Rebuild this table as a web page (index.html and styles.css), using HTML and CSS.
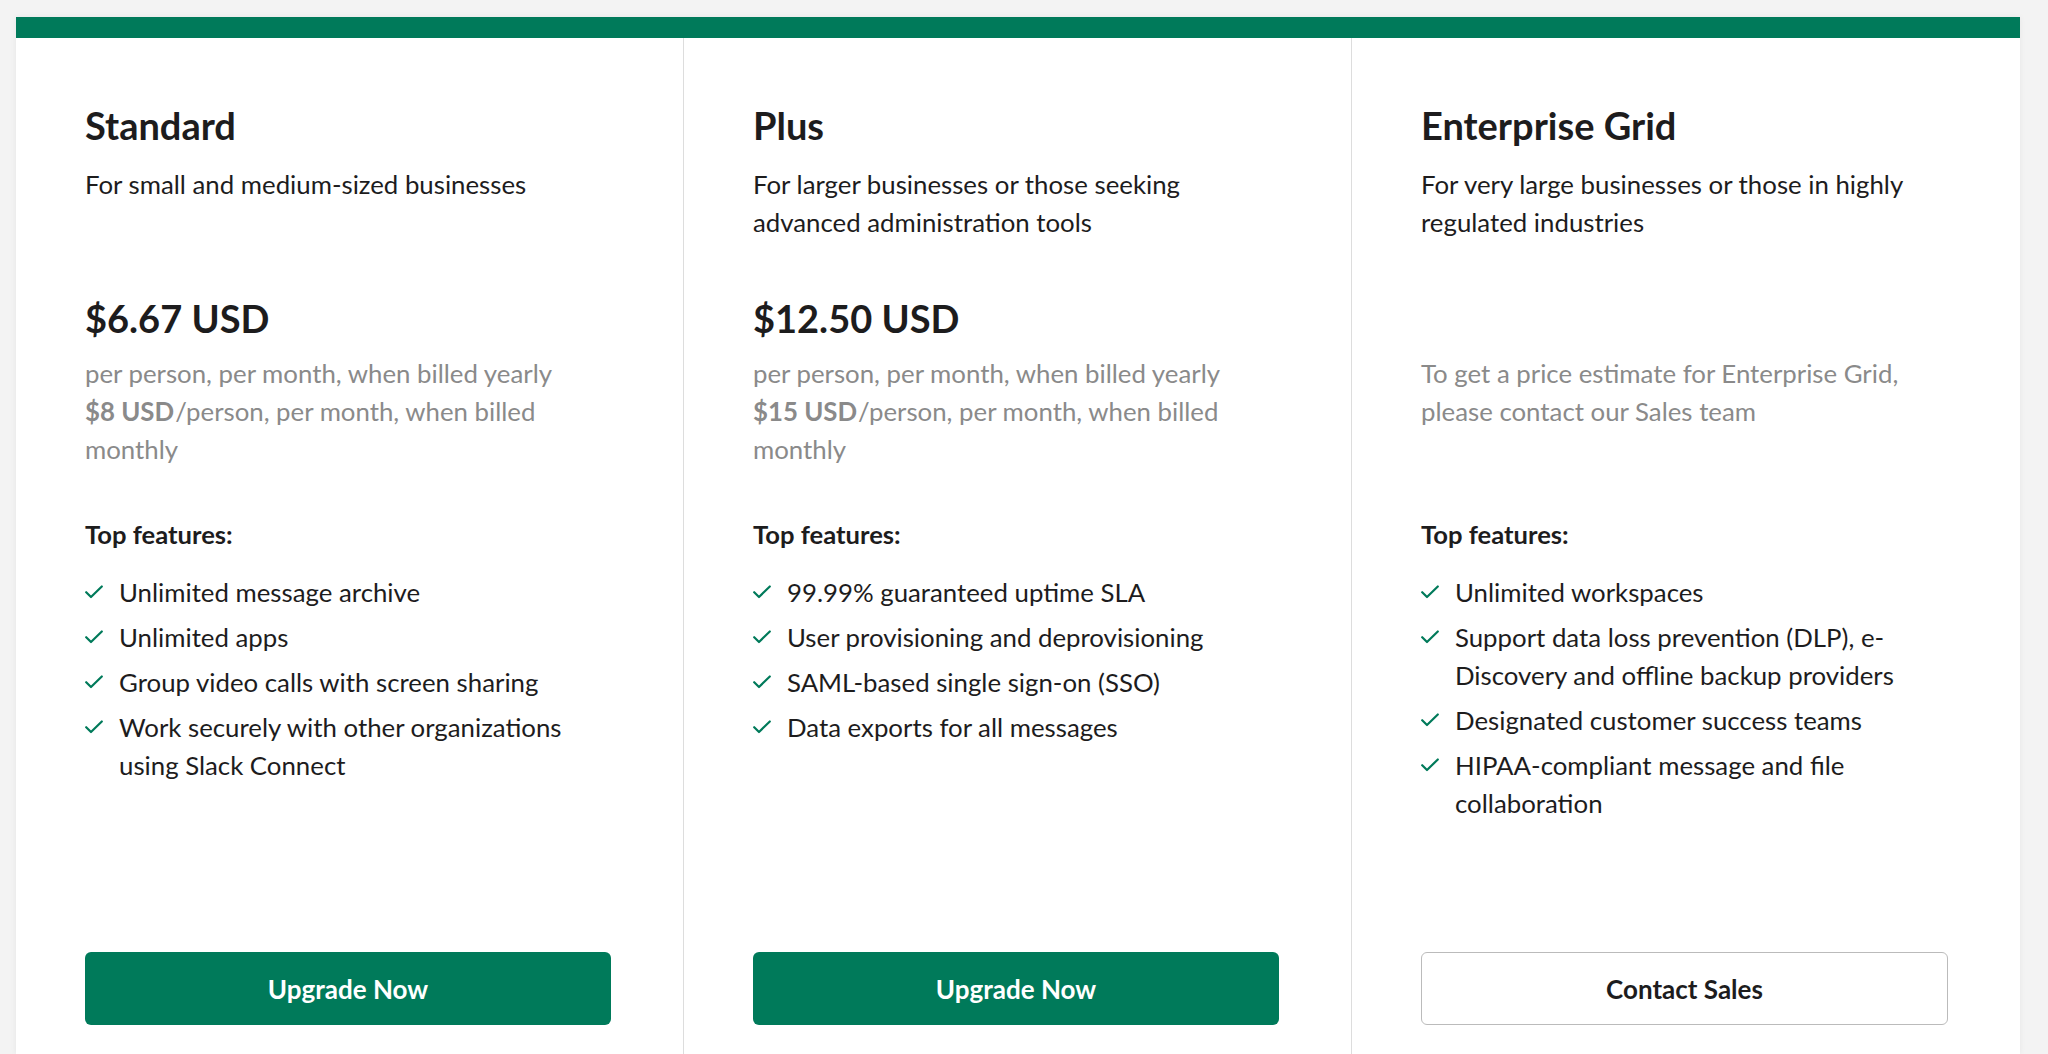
FILE: index.html
```html
<!DOCTYPE html>
<html lang="en">
<head>
<meta charset="utf-8">
<title>Plans</title>
<link rel="stylesheet" href="styles.css">
</head>
<body>
<div class="card">
  <div class="topbar"></div>
  <div class="plans">
    <section class="plan">
      <h2 class="plan-title">Standard</h2>
      <p class="plan-desc">For small and medium-sized businesses</p>
      <div class="price">$6.67 USD</div>
      <p class="price-note">per person, per month, when billed yearly<br><b>$8 USD</b>/person, per month, when billed monthly</p>
      <h3 class="feat-title">Top features:</h3>
      <ul class="features">
        <li><svg class="check" viewBox="0 0 18 14"><polyline points="1.2,7.2 6,12 16.8,1.5"/></svg><span>Unlimited message archive</span></li>
        <li><svg class="check" viewBox="0 0 18 14"><polyline points="1.2,7.2 6,12 16.8,1.5"/></svg><span>Unlimited apps</span></li>
        <li><svg class="check" viewBox="0 0 18 14"><polyline points="1.2,7.2 6,12 16.8,1.5"/></svg><span>Group video calls with screen sharing</span></li>
        <li><svg class="check" viewBox="0 0 18 14"><polyline points="1.2,7.2 6,12 16.8,1.5"/></svg><span>Work securely with other organizations using Slack Connect</span></li>
      </ul>
      <button class="btn btn-primary">Upgrade Now</button>
    </section>
    <section class="plan">
      <h2 class="plan-title">Plus</h2>
      <p class="plan-desc">For larger businesses or those seeking advanced administration tools</p>
      <div class="price">$12.50 USD</div>
      <p class="price-note">per person, per month, when billed yearly<br><b>$15 USD</b>/person, per month, when billed monthly</p>
      <h3 class="feat-title">Top features:</h3>
      <ul class="features">
        <li><svg class="check" viewBox="0 0 18 14"><polyline points="1.2,7.2 6,12 16.8,1.5"/></svg><span>99.99% guaranteed uptime SLA</span></li>
        <li><svg class="check" viewBox="0 0 18 14"><polyline points="1.2,7.2 6,12 16.8,1.5"/></svg><span>User provisioning and deprovisioning</span></li>
        <li><svg class="check" viewBox="0 0 18 14"><polyline points="1.2,7.2 6,12 16.8,1.5"/></svg><span>SAML-based single sign-on (SSO)</span></li>
        <li><svg class="check" viewBox="0 0 18 14"><polyline points="1.2,7.2 6,12 16.8,1.5"/></svg><span>Data exports for all messages</span></li>
      </ul>
      <button class="btn btn-primary">Upgrade Now</button>
    </section>
    <section class="plan">
      <h2 class="plan-title">Enterprise Grid</h2>
      <p class="plan-desc">For very large businesses or those in highly regulated industries</p>
      <div class="price"></div>
      <p class="price-note">To get a price estimate for Enterprise Grid, please contact our Sales team</p>
      <h3 class="feat-title">Top features:</h3>
      <ul class="features">
        <li><svg class="check" viewBox="0 0 18 14"><polyline points="1.2,7.2 6,12 16.8,1.5"/></svg><span>Unlimited workspaces</span></li>
        <li><svg class="check" viewBox="0 0 18 14"><polyline points="1.2,7.2 6,12 16.8,1.5"/></svg><span>Support data loss prevention (DLP), e-Discovery and offline backup providers</span></li>
        <li><svg class="check" viewBox="0 0 18 14"><polyline points="1.2,7.2 6,12 16.8,1.5"/></svg><span>Designated customer success teams</span></li>
        <li><svg class="check" viewBox="0 0 18 14"><polyline points="1.2,7.2 6,12 16.8,1.5"/></svg><span>HIPAA-compliant message and file collaboration</span></li>
      </ul>
      <button class="btn btn-outline">Contact Sales</button>
    </section>
  </div>
</div>
</body>
</html>
```
FILE: styles.css
```css
html, body {
  margin: 0;
  padding: 0;
  height: 100%;
}
body {
  background: #f3f3f3;
  font-family: Lato, "Noto Sans", sans-serif;
  color: #1d1c1d;
  overflow: hidden;
}
.card {
  margin: 17px 28px 0 16px;
  background: #fff;
  min-height: calc(100% - 17px);
  display: flex;
  flex-direction: column;
  box-shadow: 0 0 6px rgba(0,0,0,0.06);
}
.topbar {
  height: 21px;
  background: #007a5a;
}
.plans {
  flex: 1;
  display: grid;
  grid-template-columns: 667fr 668fr 669fr;
}
.plan {
  display: flex;
  flex-direction: column;
  padding: 65px 72px 29px 69px;
}
.plan + .plan {
  border-left: 1px solid #dddddd;
}
.plan-title {
  margin: 0;
  font-size: 38px;
  line-height: 1.2;
  font-weight: 700;
}
.plan-desc {
  margin: 16px 0 0;
  font-size: 25.8px;
  line-height: 38px;
  min-height: 76px;
}
.price {
  margin-top: 55px;
  font-size: 38px;
  line-height: 1.2;
  height: 45.6px;
  font-weight: 700;
}
.price-note {
  margin: 13px 0 0;
  font-size: 25.8px;
  line-height: 38px;
  min-height: 114px;
  color: #8a8a8a;
}
.price-note b {
  font-weight: 700;
  margin-right: 1px;
}
.feat-title {
  margin: 47px 0 0;
  font-size: 25.6px;
  line-height: 38px;
  font-weight: 700;
}
.features {
  list-style: none;
  margin: 20px 0 0;
  padding: 0;
  font-size: 25.8px;
  line-height: 38px;
}
.features li {
  display: flex;
  align-items: flex-start;
  gap: 16px;
}
.features li + li {
  margin-top: 7px;
}
.check {
  flex: none;
  width: 18px;
  height: 14px;
  margin-top: 12px;
  fill: none;
  stroke: #007a5a;
  stroke-width: 2.2;
  stroke-linecap: round;
  stroke-linejoin: round;
}
.btn {
  margin-top: auto;
  height: 73px;
  width: 100%;
  border-radius: 6px;
  font-family: Lato, "Noto Sans", sans-serif;
  font-size: 26px;
  font-weight: 700;
  cursor: pointer;
}
.btn-primary {
  background: #007a5a;
  color: #fff;
  border: none;
}
.btn-outline {
  background: #fff;
  color: #1d1c1d;
  border: 1.5px solid #bbbbbb;
}
```
